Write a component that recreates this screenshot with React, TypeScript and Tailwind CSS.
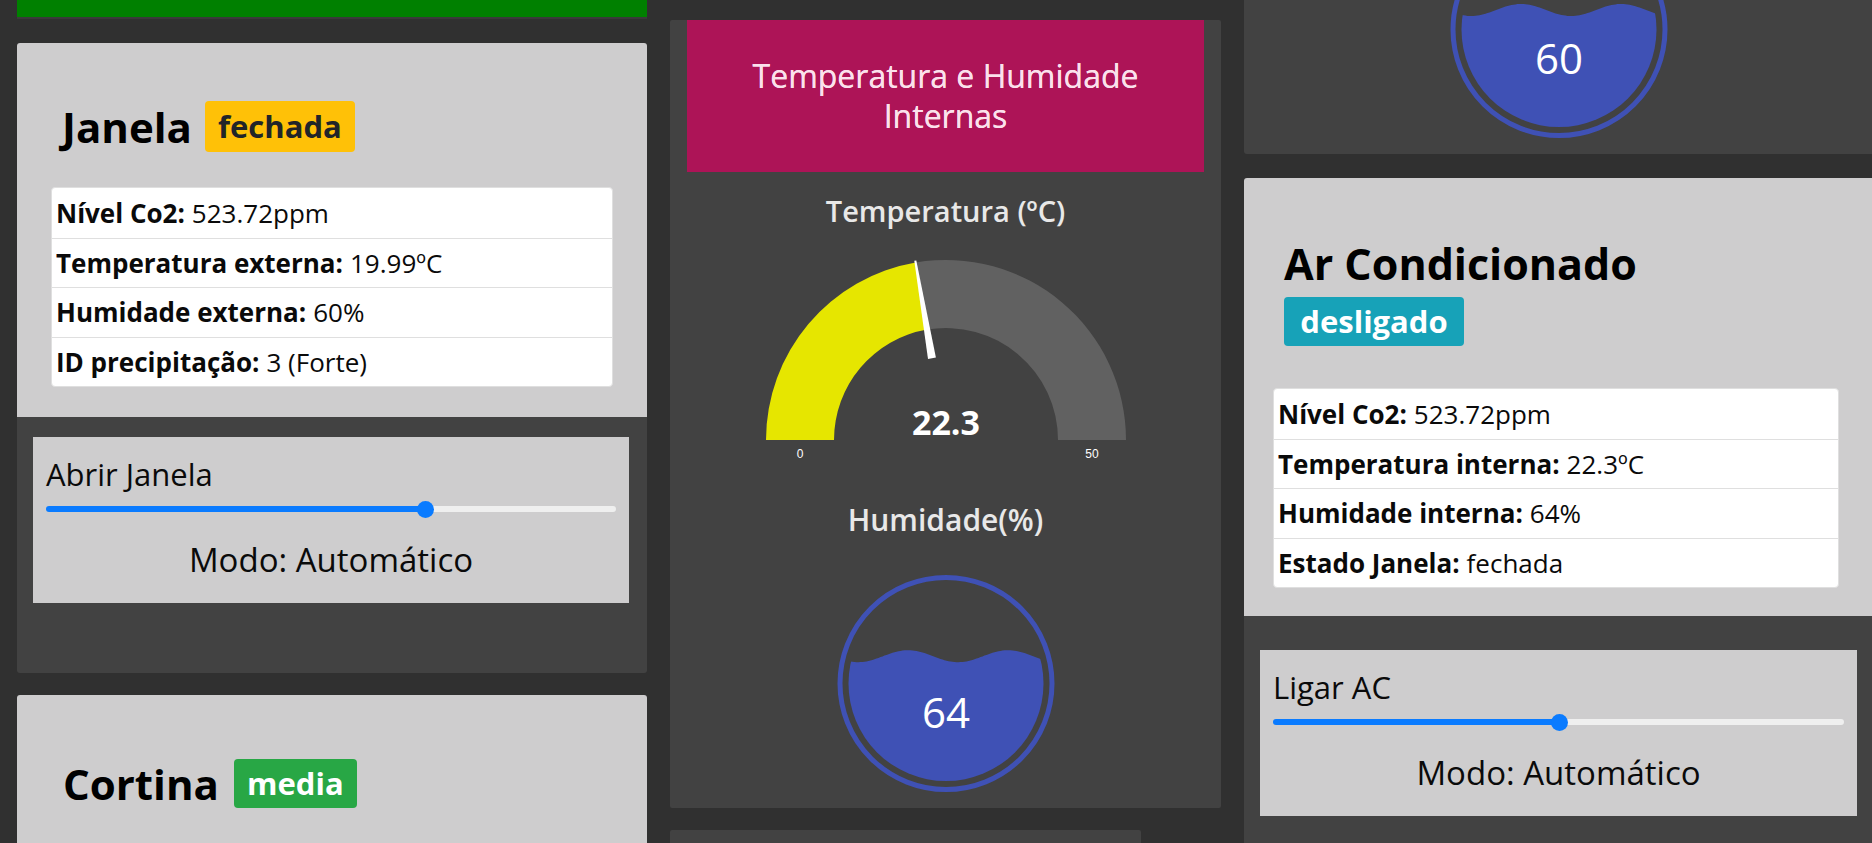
import React from "react";

type Row = [string, string];

function InfoTable({ rows }: { rows: Row[] }) {
  return (
    <div className="bg-white rounded-[4px] border border-[#dfdfdf] overflow-hidden text-[#0a0a0a]">
      {rows.map(([k, v], i) => (
        <div
          key={i}
          className={
            "h-[49.5px] flex items-center pl-[4px] text-[26px] leading-none " +
            (i > 0 ? "border-t border-[#dfdfdf]" : "")
          }
        >
          <span className="font-bold">{k}</span>
          <span className="ml-[7px]">{v}</span>
        </div>
      ))}
    </div>
  );
}

function Badge({ label, className }: { label: string; className: string }) {
  return (
    <span className={"inline-flex items-center justify-center rounded-[4px] font-bold text-[31px] leading-none " + className}>
      {label}
    </span>
  );
}

function SliderBox({ label, pct }: { label: string; pct: number }) {
  return (
    <div className="bg-[#cecdce] px-[13px] pt-[21px] pb-[25px] text-[#0a0a0a]">
      <div className="h-[32px] text-[31px] leading-[32px]">{label}</div>
      <div className="mt-[11px] h-[16px] flex items-center">
        <div className="h-[6px] bg-[#0a7bff] rounded-l-full" style={{ width: `${pct}%` }} />
        <div className="w-[17px] h-[17px] -mx-[8px] rounded-full bg-[#0a7bff] shrink-0 z-10" />
        <div className="flex-1 h-[6px] bg-[#efefef] rounded-r-full" />
      </div>
      <div className="mt-[25px] h-[36px] text-[33px] leading-[36px] text-center">Modo: Automático</div>
    </div>
  );
}

function LiquidGauge({ value }: { value: number }) {
  const cx = 116;
  const cy = 115.5;
  const r = 97.5;
  const level = cy + r - (value / 100) * 2 * r;
  let d = "";
  for (let x = cx - r - 4; x <= cx + r + 4; x += 2) {
    const y = level - 6 * Math.cos((2 * Math.PI * (x - 78)) / 100);
    d += `${d ? "L" : "M"} ${x} ${y.toFixed(1)} `;
  }
  d += `L ${cx + r + 4} ${cy + r + 4} L ${cx - r - 4} ${cy + r + 4} Z`;
  return (
    <svg width="232" height="232" viewBox="0 0 232 232" className="shrink-0">
      <defs>
        <clipPath id={`liquid-${value}`}>
          <circle cx={cx} cy={cy} r={r} />
        </clipPath>
      </defs>
      <circle cx={cx} cy={cy} r={106} fill="none" stroke="#3f51b5" strokeWidth={5} />
      <path d={d} fill="#3f51b5" clipPath={`url(#liquid-${value})`} />
      <text x={cx} y={cy + 44} textAnchor="middle" fill="#fff" fontSize="42">
        {value}
      </text>
    </svg>
  );
}

function TempGauge() {
  // value 22.3 on a 0..50 scale
  const cx = 200;
  const cy = 190;
  const R = 180;
  const r = 112;
  const a = (22.3 / 50) * Math.PI;
  const ox = cx - R * Math.cos(a);
  const oy = cy - R * Math.sin(a);
  const ix = cx - r * Math.cos(a);
  const iy = cy - r * Math.sin(a);
  const dx = -Math.cos(a);
  const dy = -Math.sin(a);
  const px = -dy;
  const py = dx;
  const tip = [cx + dx * 182, cy + dy * 182];
  const base = [cx + dx * 83, cy + dy * 83];
  const needle = [
    [tip[0] + px * 1, tip[1] + py * 1],
    [tip[0] - px * 1, tip[1] - py * 1],
    [base[0] - px * 4, base[1] - py * 4],
    [base[0] + px * 4, base[1] + py * 4],
  ]
    .map((p) => p.map((n) => n.toFixed(1)).join(","))
    .join(" ");

  return (
    <svg width="400" height="220" viewBox="0 0 400 220" className="shrink-0">
      <path
        d={`M ${cx - R} ${cy} A ${R} ${R} 0 0 1 ${ox} ${oy} L ${ix} ${iy} A ${r} ${r} 0 0 0 ${cx - r} ${cy} Z`}
        fill="#e6e600"
      />
      <path
        d={`M ${ox} ${oy} A ${R} ${R} 0 0 1 ${cx + R} ${cy} L ${cx + r} ${cy} A ${r} ${r} 0 0 0 ${ix} ${iy} Z`}
        fill="#616161"
      />
      <polygon points={needle} fill="#fff" />
      <text x={cx} y={185} textAnchor="middle" fill="#fff" fontSize="34" fontWeight="700">
        22.3
      </text>
      <text x={54} y={208} textAnchor="middle" fill="#fff" fontSize="12" fontFamily="Liberation Sans, Arial, sans-serif">
        0
      </text>
      <text x={346} y={208} textAnchor="middle" fill="#fff" fontSize="12" fontFamily="Liberation Sans, Arial, sans-serif">
        50
      </text>
    </svg>
  );
}

export default function App() {
  return (
    <div className="h-[843px] w-[1872px] overflow-hidden bg-[#303030] font-['Open_Sans',sans-serif] pl-[17px] flex gap-[23px] items-start">
      {/* Left column */}
      <div className="w-[630px] shrink-0 flex flex-col">
        <div className="h-[19px] bg-[#008000] border-b-2 border-[#3a3a3a]" />

        <div className="mt-[24px] rounded-[3px] overflow-hidden">
          <div className="bg-[#cecdce] px-[34px] pt-[58px] pb-[30px]">
            <div className="h-[51px] flex items-center pl-[11px]">
              <span className="text-[42px] font-bold text-[#000] leading-none">Janela</span>
              <Badge label="fechada" className="ml-[13px] w-[150px] h-[51px] bg-[#ffc107] text-[#212529]" />
            </div>
            <div className="mt-[35px]">
              <InfoTable
                rows={[
                  ["Nível Co2:", "523.72ppm"],
                  ["Temperatura externa:", "19.99ºC"],
                  ["Humidade externa:", "60%"],
                  ["ID precipitação:", "3 (Forte)"],
                ]}
              />
            </div>
          </div>
          <div className="bg-[#424242] h-[256px] pt-[20px] pl-[16px] pr-[18px]">
            <SliderBox label="Abrir Janela" pct={66.5} />
          </div>
        </div>

        <div className="mt-[22px] rounded-t-[3px] bg-[#cecdce] h-[200px] px-[34px] pt-[64px]">
          <div className="h-[49px] flex items-center pl-[12px]">
            <span className="text-[42px] font-bold text-[#000] leading-none">Cortina</span>
            <Badge label="media" className="ml-[15px] w-[123px] h-[49px] bg-[#28a745] text-white" />
          </div>
        </div>
      </div>

      {/* Middle column */}
      <div className="w-[551px] shrink-0 flex flex-col mt-[20px]">
        <div className="h-[788px] bg-[#424242] rounded-[2px] flex flex-col items-center">
          <div className="w-[517px] h-[152px] bg-[#ad1457] flex items-center justify-center text-center text-[#fbe1ec] text-[32px] leading-[40px] px-[30px] [text-shadow:0_0_0.6px_#fbe1ec]">
            Temperatura e Humidade Internas
          </div>
          <div className="h-[78px] flex items-center text-[29px] font-semibold text-[#e8e8e8]">Temperatura (ºC)</div>
          <TempGauge />
          <div className="h-[98px] flex items-center text-[30px] font-semibold text-[#e8e8e8]">Humidade(%)</div>
          <LiquidGauge value={64} />
        </div>
        <div className="mt-[22px] w-[471px] h-[100px] bg-[#424242] rounded-[2px]" />
      </div>

      {/* Right column */}
      <div className="w-[630px] shrink-0 flex flex-col">
        <div className="h-[154px] bg-[#424242] rounded-b-[3px] overflow-hidden flex justify-center">
          <div className="-mt-[86px]">
            <LiquidGauge value={60} />
          </div>
        </div>

        <div className="mt-[24px] rounded-[3px] overflow-hidden">
          <div className="bg-[#cecdce] pl-[29px] pr-[35px] pt-[60px] pb-[28px]">
            <div className="h-[50px] flex items-center pl-[11px] text-[43px] font-bold text-[#000] leading-none">
              Ar Condicionado
            </div>
            <div className="mt-[9px] pl-[11px]">
              <Badge label="desligado" className="w-[180px] h-[49px] bg-[#17a2b8] text-white" />
            </div>
            <div className="mt-[42px]">
              <InfoTable
                rows={[
                  ["Nível Co2:", "523.72ppm"],
                  ["Temperatura interna:", "22.3ºC"],
                  ["Humidade interna:", "64%"],
                  ["Estado Janela:", "fechada"],
                ]}
              />
            </div>
          </div>
          <div className="bg-[#424242] h-[260px] pt-[34px] pl-[16px] pr-[17px]">
            <SliderBox label="Ligar AC" pct={50} />
          </div>
        </div>
      </div>
    </div>
  );
}
